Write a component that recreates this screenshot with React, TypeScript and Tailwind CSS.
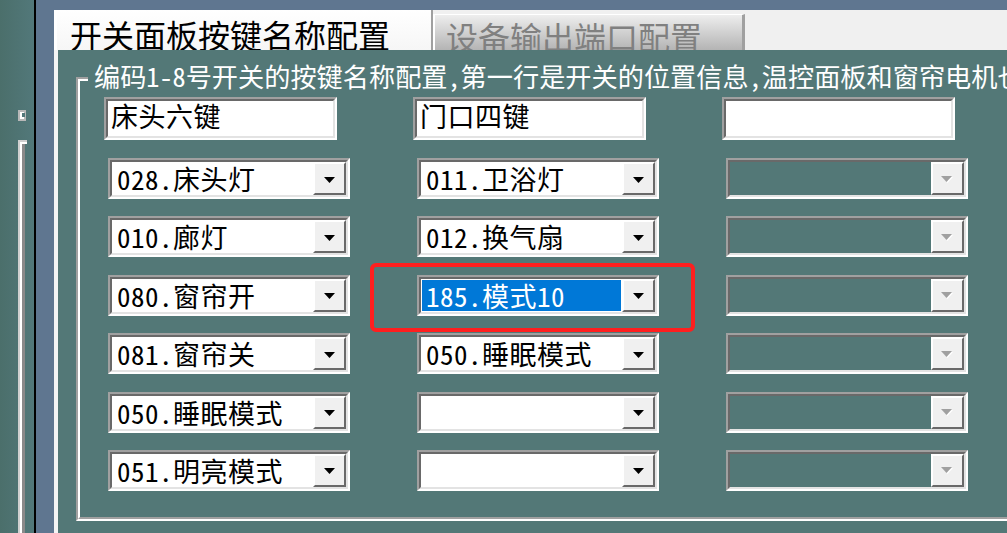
import clsx from 'clsx'

const col1 = ['028.床头灯', '010.廊灯', '080.窗帘开', '081.窗帘关', '050.睡眠模式', '051.明亮模式']
const col2 = ['011.卫浴灯', '012.换气扇', '185.模式10', '050.睡眠模式', '', '']

function Arrow({ disabled }: { disabled?: boolean }) {
  if (disabled) {
    return (
      <svg width="13" height="8" viewBox="0 0 13 8">
        <polygon points="1,1 12,1 6.5,7" fill="#ffffff" />
        <polygon points="0,0 11,0 5.5,6" fill="#a0a0a0" />
      </svg>
    )
  }
  return (
    <svg width="11" height="6" viewBox="0 0 11 6">
      <polygon points="0,0 11,0 5.5,6" fill="#000000" />
    </svg>
  )
}

function Sunken({ className, children }: { className?: string; children: React.ReactNode }) {
  return (
    <div className={clsx('border-2 border-t-[#a0a0a0] border-l-[#a0a0a0] border-b-white border-r-white', className)}>
      <div className="flex h-full border-2 border-t-[#696969] border-l-[#696969] border-b-[#e3e3e3] border-r-[#e3e3e3]">
        {children}
      </div>
    </div>
  )
}

function TextBox({ value }: { value: string }) {
  return (
    <Sunken className="h-[43px] w-[233px]">
      <div className="flex-1 bg-white pl-[3px] pt-[1px] text-[27px] leading-none tracking-[0.5px] text-black">{value}</div>
    </Sunken>
  )
}

function Combo({ value, selected, disabled }: { value: string; selected?: boolean; disabled?: boolean }) {
  return (
    <Sunken className="h-[41px] w-[242px]">
      <div className={clsx('flex-1 p-px', !disabled && 'bg-white')}>
        <div
          className={clsx(
            'flex h-full items-center pl-[4px] text-[27px] leading-none tracking-[0.5px] whitespace-pre',
            selected ? 'bg-[#0078d7] text-white' : 'text-black'
          )}
        >
          {value}
        </div>
      </div>
      <div className="flex w-[33px] items-center justify-center border-2 border-t-white border-l-white border-b-[#696969] border-r-[#696969] bg-[#f0f0f0] pt-[2px]">
        <Arrow disabled={disabled} />
      </div>
    </Sunken>
  )
}

function LeftStrip() {
  return (
    <div className="flex w-[34px] flex-col bg-gradient-to-r from-[#4b6f6b] to-[#52787a]">
      <div className="h-[110px]" />
      <div className="ml-[18px] h-[11px] w-[8px] border-2 border-[#b8b8b8] bg-white">
        <div className="ml-[2px] mt-[1px] h-[4px] w-[3px] bg-[#52787a]" />
      </div>
      <div className="h-[19px]" />
      <div className="ml-[18px] w-[9px] flex-1 border-l-2 border-t-2 border-[#d0d0d0]">
        <div className="h-full border-l-2 border-t-2 border-white">
          <div className="h-full border-l-[3px] border-[#8a8a8a]" />
        </div>
      </div>
    </div>
  )
}

export default function App() {
  return (
    <div className="flex h-[533px] w-[1007px] overflow-hidden bg-[#537877] [font-family:'Noto_Sans_Mono_CJK_SC','Noto_Sans_CJK_SC',sans-serif]">
      <LeftStrip />
      <div className="w-[2px] bg-black" />
      <div className="flex min-w-0 flex-1 flex-col">
        <div className="h-[10px] bg-[#5f7690]" />
        <div className="flex min-h-0 flex-1">
          <div className="w-[18px] bg-[#5f7690]" />
          <div className="flex min-w-0 flex-1 flex-col">
            {/* tabs */}
            <div className="flex h-[40px] bg-[#f0f0f0]">
              <div className="h-full w-[379px] overflow-hidden border-l-[3px] border-r-2 border-l-white border-r-[#a0a0a0] bg-gradient-to-b from-white to-[#f6f6f6] pl-[13px] pt-[8px] text-[32px] leading-none text-black whitespace-nowrap">
                开关面板按键名称配置
              </div>
              <div className="mt-[4px] h-[36px] w-[312px] overflow-hidden border-l-2 border-r-[3px] border-t border-l-white border-r-[#a0a0a0] border-t-white bg-gradient-to-b from-[#eeeeee] to-[#b4b4b4] pl-[11px] pt-[5px] text-[32px] leading-none text-[#808080] whitespace-nowrap">
                设备输出端口配置
              </div>
            </div>
            {/* panel */}
            <div className="flex-1 border-l-4 border-[#f4f4f4] pl-[18px] pt-[27px]">
              <div className="relative h-[444px] w-[1100px] border-b-2 border-l-2 border-t-2 border-b-white border-l-[#a0a0a0] border-t-[#a0a0a0]">
                <div className="flex h-full border-b-2 border-l-2 border-t-2 border-b-[#a0a0a0] border-l-white border-t-white pl-[24px] pt-[16px]">
                  <div className="flex w-[309px] flex-col">
                    <TextBox value="床头六键" />
                    <div className="ml-[4px] mt-[18px] flex flex-col gap-[17.4px]">
                      {col1.map((v, i) => (
                        <Combo key={i} value={v} />
                      ))}
                    </div>
                  </div>
                  <div className="flex w-[309px] flex-col">
                    <TextBox value="门口四键" />
                    <div className="ml-[4px] mt-[18px] flex flex-col gap-[17.4px]">
                      {col2.map((v, i) =>
                        i === 2 ? (
                          <div key={i} className="relative">
                            <Combo value={v} selected />
                            <div className="pointer-events-none absolute -left-[47px] -top-[12px] h-[69px] w-[325px] rounded-[6px] border-4 border-[#ff1f1f]" />
                          </div>
                        ) : (
                          <Combo key={i} value={v} />
                        )
                      )}
                    </div>
                  </div>
                  <div className="flex w-[309px] flex-col">
                    <TextBox value="" />
                    <div className="ml-[4px] mt-[18px] flex flex-col gap-[17.4px]">
                      {[0, 1, 2, 3, 4, 5].map(i => (
                        <Combo key={i} value="" disabled />
                      ))}
                    </div>
                  </div>
                </div>
                <div className="absolute left-[10px] top-[-18px] bg-[#537877] pl-[6px] pr-[2px] text-[26.2px] leading-[30px] text-white whitespace-nowrap">
                  编码1-8号开关的按键名称配置,第一行是开关的位置信息,温控面板和窗帘电机也需要配置
                </div>
              </div>
            </div>
          </div>
        </div>
      </div>
    </div>
  )
}
